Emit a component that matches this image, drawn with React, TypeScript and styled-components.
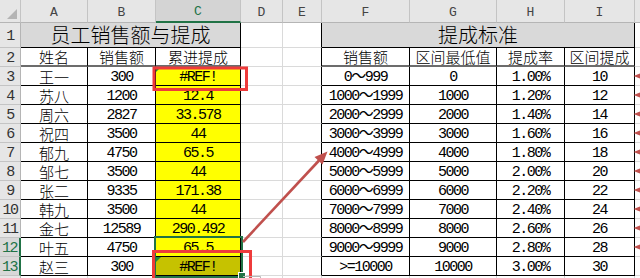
import styled, { createGlobalStyle } from 'styled-components'

const GlobalStyle = createGlobalStyle`
  html, body { margin: 0; padding: 0; background: #fff; overflow: hidden; }
  #root { width: 640px; height: 278px; }
`

const GRID = '#dadada'
const INK = '#000'
const HEAD_LINE = '#c4c4c4'
const GREEN = '#217346'
const YELLOW = '#ffff00'
const SHADED = '#c6c200'
const TITLE_BG = '#d9d9d9'

// J is only a sliver at the right edge, so its letter is not shown
const letters = ['A', 'B', 'C', 'D', 'E', 'F', 'G', 'H', 'I', '']

const people: [string, string, string][] = [
  ['王一', '300', '#REF!'],
  ['苏八', '1200', '12.4'],
  ['周六', '2827', '33.578'],
  ['祝四', '3500', '44'],
  ['郁九', '4750', '65.5'],
  ['邹七', '3500', '44'],
  ['张二', '9335', '171.38'],
  ['韩九', '3500', '44'],
  ['金七', '12589', '290.492'],
  ['叶五', '4750', '65.5'],
  ['赵三', '300', '#REF!'],
]

const rates: [string, string, string, string][] = [
  ['0～999', '0', '1.00%', '10'],
  ['1000～1999', '1000', '1.20%', '12'],
  ['2000～2999', '2000', '1.40%', '14'],
  ['3000～3999', '3000', '1.60%', '16'],
  ['4000～4999', '4000', '1.80%', '18'],
  ['5000～5999', '5000', '2.00%', '20'],
  ['6000～6999', '6000', '2.20%', '22'],
  ['7000～7999', '7000', '2.40%', '24'],
  ['8000～8999', '8000', '2.60%', '26'],
  ['9000～9999', '9000', '2.80%', '28'],
  ['>=10000', '10000', '3.00%', '30'],
]

export default function App() {
  return (
    <>
      <GlobalStyle />
      <Sheet>
        <Grid>
          <Corner />
          {letters.map((l, i) => (
            <ColHead key={i} $active={l === 'C'}>{l}</ColHead>
          ))}

          <RowHead>1</RowHead>
          <Cell $span={3} $kind='title' $bg={TITLE_BG} $r={INK} $b={INK}>员工销售额与提成</Cell>
          <Cell />
          <Cell $r={INK} />
          <Cell $span={4} $kind='title' $bg={TITLE_BG} $r={INK} $b={INK}>提成标准</Cell>
          <Cell />

          <RowHead>2</RowHead>
          {['姓名', '销售额', '累进提成'].map(t => (
            <Cell key={t} $r={INK} $b='#6c6c6c' $bw={2}>{t}</Cell>
          ))}
          <Cell />
          <Cell $r={INK} />
          {['销售额', '区间最低值', '提成率', '区间提成'].map(t => (
            <Cell key={'r' + t} $r={INK} $b='#6c6c6c' $bw={2}>{t}</Cell>
          ))}
          <Cell />

          {people.map((p, i) => {
            const row = i + 3
            const rate = rates[i]
            const last = row === 13
            return [
              <RowHead key={'h' + row} $active={row >= 12}>{row}</RowHead>,
              <Cell key={'a' + row} $r={INK} $b={INK}>{p[0]}</Cell>,
              <Cell key={'b' + row} $r={INK} $b={INK} $kind='num'>{p[1]}</Cell>,
              <Cell key={'c' + row} $r={INK} $b={INK} $kind='num' $bg={last ? SHADED : YELLOW} $flag={p[2] === '#REF!'}>{p[2]}</Cell>,
              <Cell key={'d' + row} />,
              <Cell key={'e' + row} $r={INK} />,
              <Cell key={'f' + row} $r={INK} $b={INK} $kind='num'>{rate[0]}</Cell>,
              <Cell key={'g' + row} $r={INK} $b={INK} $kind='num'>{rate[1]}</Cell>,
              <Cell key={'i' + row} $r={INK} $b={INK} $kind='num'>{rate[2]}</Cell>,
              <Cell key={'j' + row} $r={INK} $b={INK} $kind='num'>{rate[3]}</Cell>,
              <Cell key={'k' + row} />,
            ]
          })}

          <RowHead />
          {letters.map((_, i) => <Cell key={'z' + i} />)}
        </Grid>

        <Selection />
        <FillHandle />

        <Marks width='640' height='278' viewBox='0 0 640 278'>
          <rect x='154' y='68' width='92.5' height='21.5' fill='none' stroke='#ee3b3b' strokeWidth='3' />
          <rect x='153.5' y='251.5' width='97' height='40' fill='none' stroke='#ee3b3b' strokeWidth='3' />
          <line x1='243' y1='242' x2='319' y2='160.5' stroke='#c0504d' strokeWidth='2.6' />
          <polygon points='327.5,151.5 322.5,164.5 314.5,157' fill='#c0504d' />
          {Array.from({ length: 10 }, (_, i) => {
            const y = 76 + i * 19
            return <polygon key={i} points={`633.5,${y} 641,${y - 3} 641,${y + 3}`} fill='#c0504d' />
          })}
          <polyline points='243,276.5 260.5,276.5 260.5,280' fill='none' stroke='#b8b8b8' strokeWidth='1' />
        </Marks>
      </Sheet>
    </>
  )
}

const Sheet = styled.div`
  position: relative;
  width: 640px;
  height: 278px;
  overflow: hidden;
  background: #fff;
`

const Grid = styled.div`
  display: grid;
  grid-template-columns: 21px 67px 68px 85px 42px 39px 88px 87px 68px 70px 40px;
  grid-template-rows: 23px 25px repeat(13, 19px);
  width: 675px;
`

const Corner = styled.div`
  position: relative;
  box-sizing: border-box;
  background: #e6e6e6;
  border-right: 1px solid ${HEAD_LINE};
  border-bottom: 1px solid #b5b5b5;

  &::after {
    content: '';
    position: absolute;
    right: 3px;
    bottom: 3px;
    border-style: solid;
    border-width: 0 0 10px 10px;
    border-color: transparent transparent #b4b4b4 transparent;
  }
`

const ColHead = styled.div<{ $active?: boolean }>`
  box-sizing: border-box;
  display: flex;
  align-items: center;
  justify-content: center;
  padding-top: 2px;
  background: ${p => (p.$active ? '#d4d4d4' : '#e6e6e6')};
  border-right: 1px solid ${HEAD_LINE};
  border-bottom: ${p => (p.$active ? `2px solid ${GREEN}` : '1px solid #b5b5b5')};
  color: ${p => (p.$active ? GREEN : '#444')};
  font-family: "Liberation Mono", monospace;
  font-size: 13px;
`

const RowHead = styled.div<{ $active?: boolean }>`
  box-sizing: border-box;
  display: flex;
  align-items: center;
  justify-content: center;
  background: ${p => (p.$active ? '#d8d8d8' : '#e6e6e6')};
  border-right: ${p => (p.$active ? `2px solid ${GREEN}` : '1px solid #b5b5b5')};
  border-bottom: 1px solid ${HEAD_LINE};
  color: ${p => (p.$active ? GREEN : '#333')};
  font-family: "Liberation Mono", monospace;
  font-size: 15px;
  letter-spacing: -1.5px;
  line-height: 1;
  padding-top: 2px;
`

type Kind = 'cjk' | 'num' | 'title'

interface CellProps {
  $bg?: string
  $r?: string
  $b?: string
  $bw?: number
  $span?: number
  $kind?: Kind
  $flag?: boolean
}

const Cell = styled.div<CellProps>`
  position: relative;
  box-sizing: border-box;
  display: flex;
  align-items: center;
  justify-content: center;
  white-space: nowrap;
  grid-column: span ${p => p.$span ?? 1};
  background: ${p => p.$bg ?? '#fff'};
  border-right: 1px solid ${p => p.$r ?? GRID};
  border-bottom: ${p => p.$bw ?? 1}px solid ${p => p.$b ?? GRID};
  color: #000;
  font-family: ${p =>
    p.$kind === 'num'
      ? '"Liberation Mono", "Noto Sans CJK SC", monospace'
      : '"Noto Sans CJK SC", sans-serif'};
  font-size: ${p => (p.$kind === 'title' ? 20 : 15)}px;
  font-weight: ${p => (p.$kind === 'num' ? 400 : 300)};
  letter-spacing: ${p => (p.$kind === 'num' ? '-1.5px' : '0')};
  line-height: 1;
  padding-top: ${p => (p.$kind === 'num' ? 2 : 0)}px;

  &::before {
    content: '';
    display: ${p => (p.$flag ? 'block' : 'none')};
    position: absolute;
    left: 0;
    top: 0;
    border-style: solid;
    border-width: 5px 5px 0 0;
    border-color: #1f8a3a transparent transparent transparent;
  }
`

const Selection = styled.div`
  position: absolute;
  left: 154px;
  top: 236px;
  width: 89px;
  height: 42px;
  box-sizing: border-box;
  border: 2px solid ${GREEN};
  pointer-events: none;
`

const FillHandle = styled.div`
  position: absolute;
  left: 238px;
  top: 272px;
  width: 6px;
  height: 6px;
  background: ${GREEN};
  border: 1px solid #fff;
`

const Marks = styled.svg`
  position: absolute;
  left: 0;
  top: 0;
  pointer-events: none;
`
